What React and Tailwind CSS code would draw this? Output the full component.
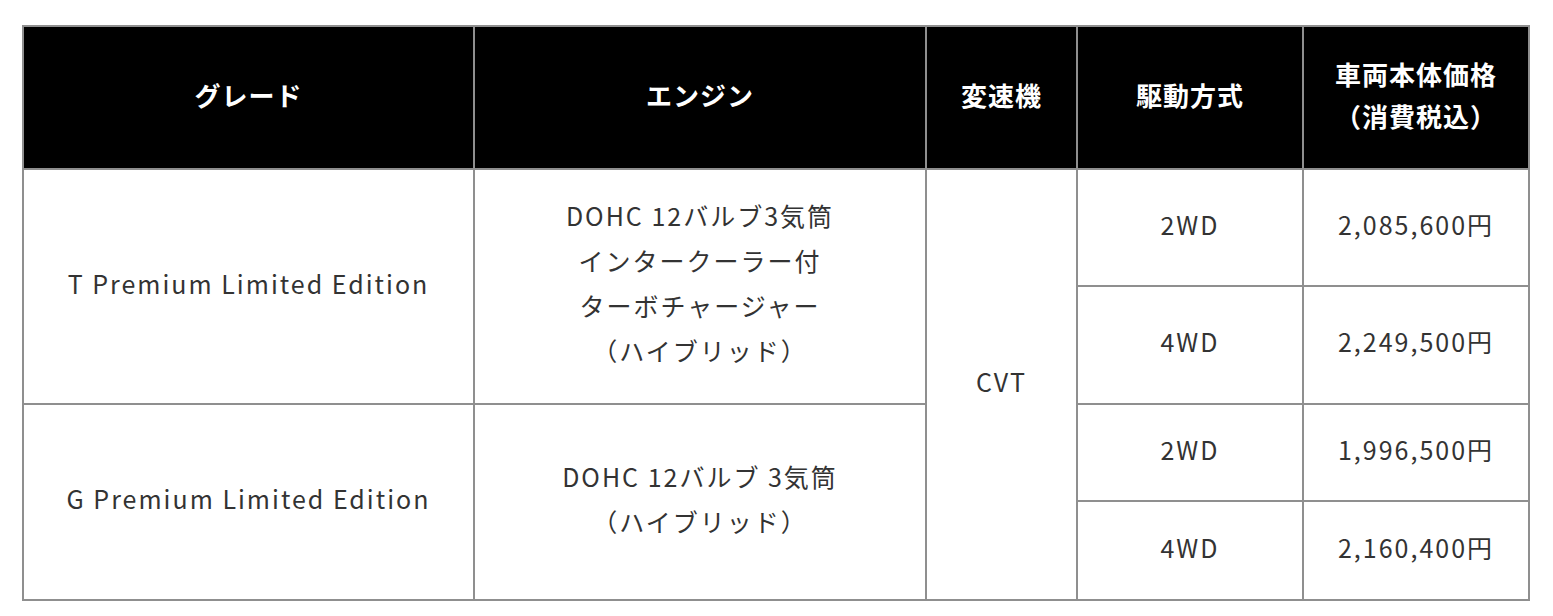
export default function App() {
  const font = { fontFamily: '"Noto Sans CJK JP", "Noto Sans", sans-serif' };
  const th = "border-2 border-[#8f8f8f] bg-black text-white font-bold text-[26px] leading-[42px] text-center align-middle tracking-[0.04em] pb-[5px]";
  const td = "border-2 border-[#8f8f8f] bg-white text-[#333333] text-[25px] leading-[45px] text-center align-middle tracking-[0.08em] pb-[7px]";
  return (
    <div className="bg-white w-[1553px] h-[616px] pt-[25px] pl-[22px]" style={font}>
      <table className="border-collapse w-[1506px] table-fixed">
        <colgroup>
          <col className="w-[451px]" />
          <col className="w-[452px]" />
          <col className="w-[151px]" />
          <col className="w-[226px]" />
          <col className="w-[226px]" />
        </colgroup>
        <thead>
          <tr className="h-[143px]">
            <th className={th}>グレード</th>
            <th className={th}>エンジン</th>
            <th className={th}>変速機</th>
            <th className={th}>駆動方式</th>
            <th className={th}>車両本体価格<br />（消費税込）</th>
          </tr>
        </thead>
        <tbody>
          <tr className="h-[117px]">
            <td className={td} rowSpan={2}>T Premium Limited Edition</td>
            <td className={td} rowSpan={2}>
              DOHC 12バルブ3気筒<br />インタークーラー付<br />ターボチャージャー<br />（ハイブリッド）
            </td>
            <td className={td} rowSpan={4}>CVT</td>
            <td className={td}>2WD</td>
            <td className={td}>2,085,600円</td>
          </tr>
          <tr className="h-[118px]">
            <td className={td}>4WD</td>
            <td className={td}>2,249,500円</td>
          </tr>
          <tr className="h-[97px]">
            <td className={td} rowSpan={2}>G Premium Limited Edition</td>
            <td className={td} rowSpan={2}>
              DOHC 12バルブ 3気筒<br />（ハイブリッド）
            </td>
            <td className={td}>2WD</td>
            <td className={td}>1,996,500円</td>
          </tr>
          <tr className="h-[99px]">
            <td className={td}>4WD</td>
            <td className={td}>2,160,400円</td>
          </tr>
        </tbody>
      </table>
    </div>
  );
}
